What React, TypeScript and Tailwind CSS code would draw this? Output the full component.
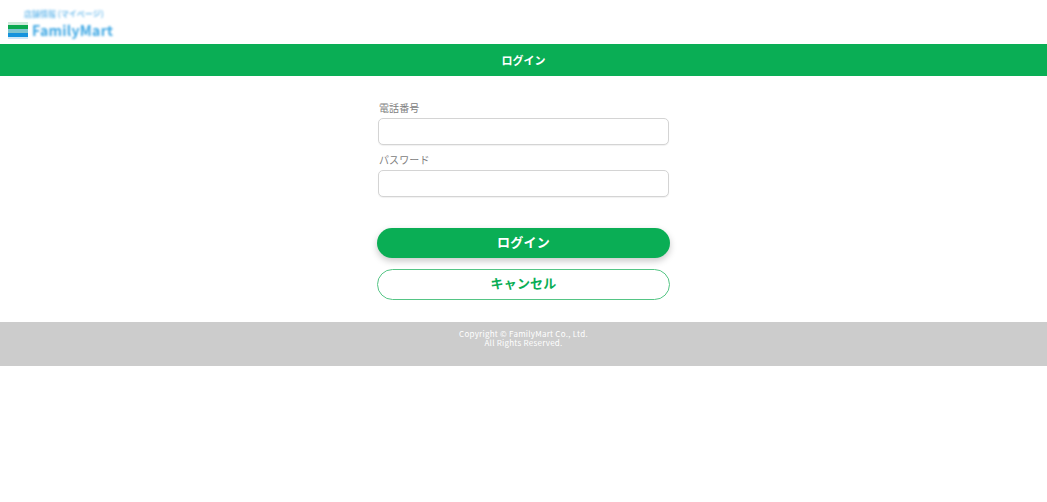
const font = { fontFamily: '"Noto Sans CJK JP", "Liberation Sans", sans-serif' };

function Logo() {
  return (
    <div className="flex h-11 flex-col pl-2 pt-2">
      <div className="ml-4 h-[11px] w-[84px] text-[8px] leading-[11px] font-bold whitespace-nowrap text-[#7cc2ee] blur-[1.2px]">
        店舗情報 (マイページ)
      </div>
      <div className="mt-[3px] flex items-center gap-[4px]">
        <svg width="20" height="17" viewBox="0 0 20 17" className="blur-[0.5px]">
          <rect width="20" height="3" fill="#cfeadb" />
          <rect y="3" width="20" height="4" fill="#0aa850" />
          <rect y="7" width="20" height="4" fill="#7cc4d0" />
          <rect y="11" width="20" height="4" fill="#1593dd" />
          <rect y="15" width="20" height="2" fill="#cfe8f8" />
        </svg>
        <span className="text-[14px] leading-[17px] font-bold tracking-[0.3px] text-[#3fa8e4] blur-[1px]">
          FamilyMart
        </span>
      </div>
    </div>
  );
}

function Field({ label }: { label: string }) {
  return (
    <div>
      <label className="block h-[19px] pl-[1px] text-[10px] leading-[17px] tracking-[0.1px] text-[#808080]">
        {label}
      </label>
      <input
        type="text"
        className="block h-[27px] w-[291px] rounded-[5px] border border-[#d4d4d4] bg-white shadow-[0_1px_1px_rgba(0,0,0,0.06)] outline-none"
      />
    </div>
  );
}

export default function App() {
  return (
    <div className="min-h-[502px] bg-white" style={font}>
      <Logo />
      <h1 className="h-8 bg-[#0aae55] text-center text-[11px] leading-8 font-bold text-white">
        ログイン
      </h1>
      <main className="mx-auto flex w-[293px] flex-col pt-[23px]">
        <div className="flex flex-col gap-[6px] pl-[1px]">
          <Field label="電話番号" />
          <Field label="パスワード" />
        </div>
        <button className="mt-[31px] h-[30px] w-[293px] rounded-full bg-[#0aae55] pb-[3px] text-[13px] font-bold tracking-[0.2px] text-white shadow-[0_3px_7px_rgba(0,0,0,0.22)]">
          ログイン
        </button>
        <button className="mt-[11px] h-[31px] w-[293px] rounded-full border border-[#55c585] bg-white pb-[3px] text-[13px] font-bold tracking-[0.2px] text-[#0aae55]">
          キャンセル
        </button>
      </main>
      <footer className="mt-[22px] h-11 bg-[#cccccc] pt-[7px] text-center text-[8px] leading-[9px] tracking-[0.25px] text-white">
        <p>Copyright © FamilyMart Co., Ltd.</p>
        <p>All Rights Reserved.</p>
      </footer>
    </div>
  );
}
